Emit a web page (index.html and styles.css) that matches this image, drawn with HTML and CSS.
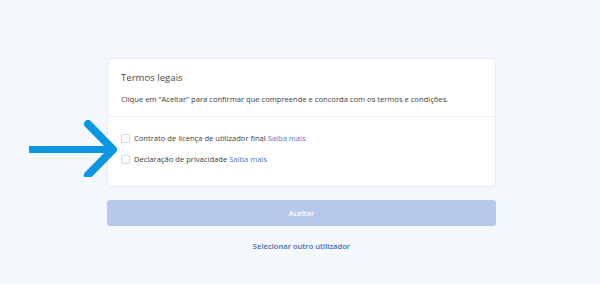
FILE: index.html
```html
<!DOCTYPE html>
<html lang="pt">
<head>
<meta charset="utf-8">
<link rel="stylesheet" href="styles.css">
</head>
<body>
<div class="page">
  <div class="wrap">
    <div class="card">
      <div class="card-head">
        <h1 class="title">Termos legais</h1>
        <p class="desc">Clique em "Aceitar" para confirmar que compreende e concorda com os termos e condições.</p>
      </div>
      <div class="card-body">
        <label class="row"><span class="box"></span><span>Contrato de licença de utilizador final <a class="more">Saiba mais</a></span></label>
        <label class="row"><span class="box"></span><span>Declaração de privacidade <a class="more">Saiba mais</a></span></label>
      </div>
    </div>
    <button class="accept">Aceitar</button>
    <div class="other"><a>Selecionar outro utilizador</a></div>
  </div>
  <svg class="arrow" width="100" height="62" viewBox="0 0 100 62">
    <path d="M0 34.5 H84" stroke="#0996e2" stroke-width="7" fill="none"/>
    <path d="M59 9 L84 34.5 L59 60" stroke="#0996e2" stroke-width="8" stroke-linecap="round" stroke-linejoin="round" fill="none"/>
  </svg>
</div>
</body>
</html>
```
FILE: styles.css
```css
* { box-sizing: border-box; }
html, body { margin: 0; padding: 0; }
body {
  background: #f4f7fc;
  font-family: "Open Sans", "Noto Sans", sans-serif;
  width: 600px;
  height: 284px;
  overflow: hidden;
}
.page { position: relative; height: 284px; padding-top: 58px; }
.wrap { width: 389px; margin-left: 107px; }
.card {
  background: #fff;
  border: 1px solid #e6ebf3;
  border-radius: 4px;
}
.card-head { padding: 10px 13px 10px; border-bottom: 1px solid #e9edf4; }
.title { margin: 0; font-size: 9.6px; line-height: 18px; font-weight: 400; color: #4a4a4a; }
.desc { margin: 5px 0 0; font-size: 7.6px; line-height: 14px; color: #3d3d3d; }
.card-body { padding: 14px 13px 20px; display: flex; flex-direction: column; gap: 7px; }
.row { display: flex; align-items: center; gap: 4px; font-size: 7.6px; line-height: 14px; color: #3d3d3d; }
.box { width: 9px; height: 9px; border: 1px solid #d3d9e2; border-radius: 2px; background: #fff; flex: none; }
.more { color: #4a7bc8; }
.accept {
  display: block; width: 100%; height: 26px; margin-top: 13px;
  border: 0; border-radius: 3px; background: #b4c9eb; color: #fff;
  font-family: inherit; font-size: 7.4px; font-weight: 600;
}
.other { margin-top: 13px; text-align: center; font-size: 7.6px; line-height: 14px; font-weight: 600; }
.other a { color: #3e6db5; }
.arrow { position: absolute; left: 29px; top: 115px; }
```
